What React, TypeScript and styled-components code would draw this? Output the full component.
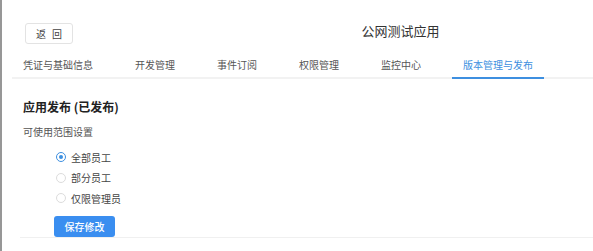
import React, { useState } from "react";
import styled, { createGlobalStyle } from "styled-components";

const GlobalStyle = createGlobalStyle`
  body {
    margin: 0;
    background: #fff;
    overflow: hidden;
    font-family: "Noto Sans CJK SC", "Noto Sans", sans-serif;
  }
`;

const tabs = ["凭证与基础信息", "开发管理", "事件订阅", "权限管理", "监控中心", "版本管理与发布"];
const scopes = ["全部员工", "部分员工", "仅限管理员"];

export default function App() {
  const [active, setActive] = useState(5);
  const [scope, setScope] = useState(0);

  return (
    <>
      <GlobalStyle />
      <SViewport>
        <SPage>
          <SHeader>
            <SBackButton>返 回</SBackButton>
            <STitle>公网测试应用</STitle>
          </SHeader>
          <STabBar>
            {tabs.map((t, i) => (
              <STab key={t} $active={i === active} onClick={() => setActive(i)}>
                {t}
              </STab>
            ))}
          </STabBar>
          <SSection>
            <SHeading>应用发布 (已发布)</SHeading>
            <SLabel>可使用范围设置</SLabel>
            <SOptions>
              {scopes.map((s, i) => (
                <SOption key={s} onClick={() => setScope(i)}>
                  <SRadio $checked={i === scope} />
                  {s}
                </SOption>
              ))}
              <SSaveButton>保存修改</SSaveButton>
            </SOptions>
          </SSection>
        </SPage>
      </SViewport>
    </>
  );
}

// the page is wider than the window; only its left part shows
const SViewport = styled.div`
  width: 100vw;
  overflow: hidden;
`;

const SPage = styled.div`
  width: 797px;
  min-height: 251px;
  border-left: 2px solid #979797;
`;

const SHeader = styled.div`
  display: grid;
  grid-template-columns: 1fr auto 1fr;
  align-items: start;
  padding: 23px 23px 0;
`;

const SBackButton = styled.button`
  justify-self: start;
  width: 48px;
  height: 21px;
  padding: 0 0 0 2px;
  border: 1px solid #e3e3e3;
  border-radius: 3px;
  background: #fff;
  color: #444;
  font-family: inherit;
  font-size: 10px;
  letter-spacing: 2px;
  cursor: pointer;
`;

const STitle = styled.div`
  font-size: 13px;
  line-height: 16px;
  color: #333;
`;

const STabBar = styled.div`
  display: flex;
  margin: 11px 0 0 10px;
  border-bottom: 2px solid #f2f2f2;
`;

const STab = styled.div<{ $active: boolean }>`
  padding: 0 11px 2px;
  margin-right: 20px;
  margin-bottom: -2px;
  line-height: 20px;
  font-size: 10px;
  color: ${(p) => (p.$active ? "#3d8fe0" : "#555")};
  border-bottom: 2px solid ${(p) => (p.$active ? "#3d8fe0" : "transparent")};
  cursor: pointer;
`;

const SSection = styled.div`
  margin-left: 18px;
  padding: 20px 0 0 3px;
  border-bottom: 1px solid #f0f0f0;
`;

const SHeading = styled.div`
  font-size: 12px;
  line-height: 16px;
  font-weight: bold;
  color: #222;
`;

const SLabel = styled.div`
  margin-top: 9px;
  font-size: 10px;
  line-height: 16px;
  color: #555;
`;

const SOptions = styled.div`
  display: flex;
  flex-direction: column;
  align-items: flex-start;
  padding: 7px 0 0 31px;
`;

const SOption = styled.label`
  display: flex;
  align-items: center;
  gap: 5px;
  height: 20.5px;
  padding-left: 2px;
  font-size: 10px;
  color: #444;
  cursor: pointer;
`;

const SRadio = styled.span<{ $checked: boolean }>`
  position: relative;
  width: 10px;
  height: 10px;
  box-sizing: border-box;
  border-radius: 50%;
  border: 1px solid ${(p) => (p.$checked ? "#3d8fe0" : "#dcdcdc")};
  background: #fff;

  &::after {
    content: "";
    display: ${(p) => (p.$checked ? "block" : "none")};
    position: absolute;
    left: 2px;
    top: 2px;
    width: 4px;
    height: 4px;
    border-radius: 50%;
    background: #3d8fe0;
  }
`;

const SSaveButton = styled.button`
  margin-top: 7.5px;
  width: 61px;
  height: 21px;
  padding: 0;
  border: none;
  border-radius: 3px;
  background: #3a8ef0;
  color: #fff;
  font-family: inherit;
  font-size: 10px;
  font-weight: 500;
  cursor: pointer;
`;
